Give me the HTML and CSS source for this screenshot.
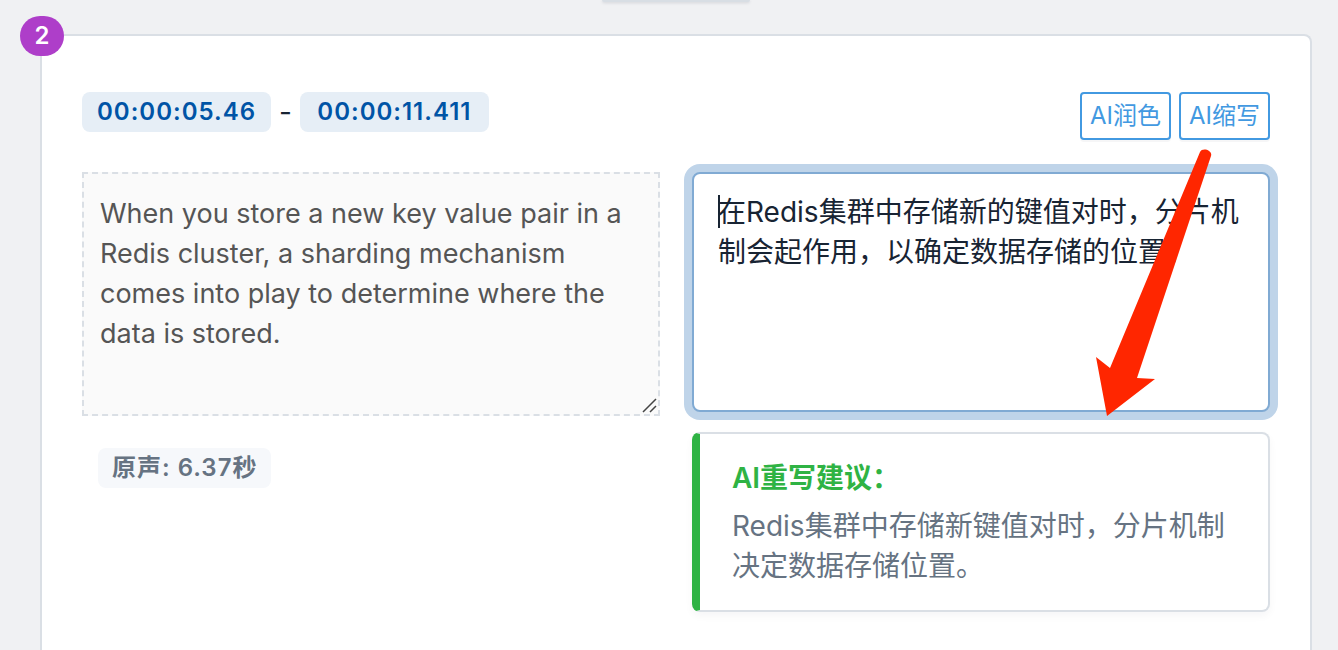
FILE: index.html
```html
<!DOCTYPE html>
<html lang="zh-CN">
<head>
  <meta charset="UTF-8" />
  <meta name="viewport" content="width=device-width, initial-scale=1.0" />
  <title>字幕编辑</title>
  <link rel="stylesheet" href="styles.css">
</head>
<body>
  <div class="prev-btn"></div>

  <section class="card">
    <span class="card-number">2</span>

    <div class="card-head">
      <div class="times">
        <span class="badge badge-time">00:00:05.46</span>
        <span>-</span>
        <span class="badge badge-time">00:00:11.411</span>
      </div>
      <div class="actions">
        <button type="button" class="btn">AI润色</button>
        <button type="button" class="btn">AI缩写</button>
      </div>
    </div>

    <div class="columns">
      <div class="col">
        <textarea class="source" lang="en" aria-label="原文" readonly>When you store a new key value pair in a Redis cluster, a sharding mechanism comes into play to determine where the data is stored.</textarea>
        <svg class="grip" viewBox="0 0 16 16" aria-hidden="true">
          <path d="M1 14 14 1M8 14l6-6" />
        </svg>
        <span class="badge badge-duration">原声: 6.37秒</span>
      </div>

      <div class="col">
        <textarea class="target" aria-label="译文">在Redis集群中存储新的键值对时，分片机制会起作用，以确定数据存储的位置。</textarea>
        <span class="caret"></span>
        <div class="suggestion">
          <strong>AI重写建议：</strong>
          <p>Redis集群中存储新键值对时，分片机制决定数据存储位置。</p>
        </div>
        <svg class="arrow" viewBox="0 0 62 270" aria-hidden="true">
          <path d="M105 4C107 -1 118 2 116 8L42 230 60 231 12 268 1 209 15 220Z" />
        </svg>
      </div>
    </div>
  </section>
</body>
</html>
```
FILE: styles.css
```css
:root {
  --bg: #f0f1f3;
  --fg: #182433;
  --muted: #667382;
  --border: #dadfe5;
  --primary: #0054a6;
  --azure: #4299e1;
  --green: #2fb344;
  --purple: #ae3ec9;
}
* { box-sizing: border-box; }
body {
  margin: 0;
  min-height: 100vh;
  padding: 0 26px 0 40px;
  display: flex;
  flex-direction: column;
  background: var(--bg);
  color: var(--fg);
  font-family: Inter, "Noto Sans CJK SC", sans-serif;
  font-size: 28px;
  line-height: 40px;
}
.prev-btn {
  align-self: center;
  width: 148px;
  height: 2px;
  margin-bottom: 32px;
  background: #d8dee4;
  border-radius: 0 0 8px 8px;
  box-shadow: 0 1px 3px rgba(24, 36, 51, 0.15);
}
.card {
  position: relative;
  flex: 1;
  padding: 56px 40px 36px;
  background: #fff;
  border: 2px solid var(--border);
  border-bottom: none;
  border-radius: 8px 8px 0 0;
}
.card-number {
  position: absolute;
  top: -20px;
  left: -22px;
  width: 44px;
  height: 40px;
  border-radius: 20px;
  background: var(--purple);
  color: #fff;
  font-size: 24px;
  font-weight: 600;
  text-align: center;
}
.card-head {
  display: flex;
  justify-content: space-between;
  align-items: flex-start;
  margin-bottom: 32px;
}
.times { display: flex; gap: 8px; }
.badge {
  display: inline-block;
  padding: 0 14px;
  border-radius: 8px;
  font-size: 24px;
  font-weight: 600;
  letter-spacing: 1px;
  white-space: nowrap;
}
.badge-time { min-width: 189px; background: #e6eef6; color: var(--primary); text-align: center; }
.badge-duration { margin: 32px 16px 0; background: #f6f8fb; color: var(--muted); }
.actions { display: flex; gap: 8px; }
.btn {
  padding: 4px 8px;
  background: #fff;
  color: var(--azure);
  border: 2px solid var(--azure);
  border-radius: 4px;
  box-shadow: 0 2px 0 rgba(24, 36, 51, 0.04);
  font: inherit;
  font-size: 24px;
  line-height: 36px;
  cursor: pointer;
}
.columns {
  display: grid;
  grid-template-columns: 1fr 1fr;
  gap: 32px;
}
.col { position: relative; min-width: 0; }
textarea {
  display: block;
  width: 100%;
  font: inherit;
  outline: none;
  resize: none;
  overflow: hidden;
}
.source {
  height: 244px;
  padding: 20px 16px;
  background: #fafafa;
  color: #555;
  border: 2px dashed var(--border);
  font-size: 27px;
}
.grip {
  position: absolute;
  top: 226px;
  right: 2px;
  width: 16px;
  height: 16px;
  fill: none;
  stroke: #444;
  stroke-width: 1.5;
}
.target {
  height: 240px;
  padding: 18px 24px;
  background: #fff;
  color: var(--fg);
  border: 2px solid #80aad3;
  border-radius: 8px;
  box-shadow: 0 0 0 8px #bfd4e9;
}
.caret {
  position: absolute;
  top: 23px;
  left: 26px;
  width: 2px;
  height: 33px;
  background: var(--fg);
}
.suggestion {
  margin-top: 20px;
  padding: 24px 32px;
  background: #fff;
  border: 2px solid var(--border);
  border-left: 8px solid var(--green);
  border-radius: 8px;
  box-shadow: 0 4px 8px rgba(24, 36, 51, 0.04);
}
.suggestion strong { display: block; color: var(--green); font-weight: 600; }
.suggestion p { margin: 8px 0 0; color: var(--muted); }
.arrow {
  position: absolute;
  top: -24px;
  right: 113px;
  width: 62px;
  height: 270px;
  overflow: visible;
  fill: #ff2600;
  pointer-events: none;
}
```
